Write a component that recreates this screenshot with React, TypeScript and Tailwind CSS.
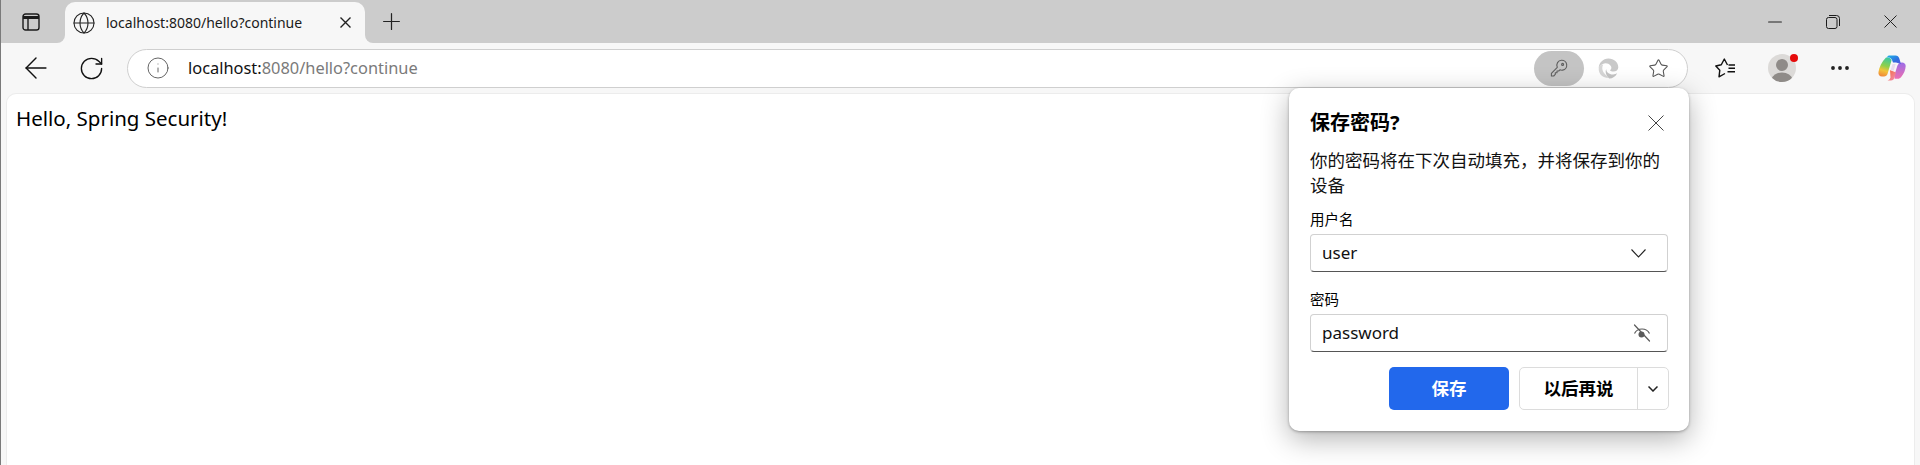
import { ArrowLeft, Globe, Minus, Plus, RotateCw, Info, Star, MoreHorizontal } from "lucide-react";

const FONT = "font-['Noto_Sans','Noto_Sans_CJK_SC',sans-serif]";

function Cross({ size, width = 1, color = "#222" }: { size: number; width?: number; color?: string }) {
  return (
    <svg width={size} height={size} viewBox={`0 0 ${size} ${size}`} fill="none" stroke={color} strokeWidth={width}>
      <path d={`M.5 .5 ${size - 0.5} ${size - 0.5}M${size - 0.5} .5 .5 ${size - 0.5}`} />
    </svg>
  );
}

function Chevron({ w, h, width = 1.1 }: { w: number; h: number; width?: number }) {
  return (
    <svg width={w} height={h} viewBox={`0 0 ${w} ${h}`} fill="none" stroke="#222" strokeWidth={width}>
      <path d={`M.5 .5 ${w / 2} ${h - 1} ${w - 0.5} .5`} />
    </svg>
  );
}

function SidebarIcon() {
  return (
    <svg width="18" height="18" viewBox="0 0 18 18" fill="none" stroke="#1b1b1b" strokeWidth="1.4">
      <rect x="1" y="1" width="16" height="16" rx="2.6" />
      <path d="M1 4.500h16" strokeWidth="3" />
      <path d="M6 5v12" />
    </svg>
  );
}

function RestoreIcon() {
  return (
    <svg width="14" height="14" viewBox="0 0 14 14" fill="none" stroke="#1b1b1b" strokeWidth="1">
      <rect x="0.5" y="2.5" width="10.5" height="11" rx="2" />
      <path d="M3 .5h7.5A3 3 0 0 1 13.500 3.500V11" />
    </svg>
  );
}

function KeyIcon() {
  return (
    <svg width="18" height="18" viewBox="0 0 18 18" fill="none" stroke="#5f5f5f" strokeWidth="1.1" strokeLinejoin="round">
      <path d="M11.500 1.200a5 5 0 0 1 1.200 9.900c-1 .2-2 .1-2.800-.3L8.700 12H7v1.700H5.300v1.700L3.700 17H1.400v-2.700l5.900-6a5 5 0 0 1 4.200-7.100Z" />
      <circle cx="12.600" cy="5.400" r="1" />
    </svg>
  );
}

function EdgeIcon() {
  return (
    <svg width="21" height="21" viewBox="0 0 21 21">
      <path
        fill="#c9c9c9"
        d="M10.500.5c5.300 0 9.800 3.800 9.800 8.800 0 2.700-2.200 4.300-4.800 4.300-1.600 0-3-.5-3.600-1.300 2-1 1.900-3.300.5-4.800C10.600 5.300 7.500 4.800 4.800 6 3 6.900 1.500 8.600 .7 10.400.7 4.900 5 .5 10.500.5Z"
      />
      <path
        fill="#d6d6d6"
        d="M.7 11c0-2.600 2.100-4.400 4.600-4.600-1.600 2.300-1.300 6.200 1.200 9.200 1 1.200 2.300 2.300 3.800 4.400C5 20 .7 16.200.7 11Z"
      />
      <path
        fill="#c4c4c4"
        d="M8.200 11c.1 3.400 3.300 5.800 7 5.500 1.500-.1 2.900-.6 4-1.300-1.600 3.300-4.800 5.400-8 5.300C8.500 18.400 6.800 14 8.200 11Z"
      />
    </svg>
  );
}

function FavoritesIcon() {
  return (
    <svg width="22" height="20" viewBox="0 0 22 20" fill="none" stroke="#111" strokeWidth="1.400" strokeLinejoin="round">
      <path d="M12.500 7 9.300 1 6.300 6.800.8 8l4 4.200-.8 6.600 6-3.300" />
      <path d="M13.500 7H20M13.500 10.300H20M12.500 13.700H20" />
    </svg>
  );
}

function ProfileIcon() {
  return (
    <div className="relative h-[28px] w-[28px]">
      <svg width="28" height="28" viewBox="0 0 28 28">
        <defs>
          <clipPath id="avatar">
            <circle cx="14" cy="14" r="14" />
          </clipPath>
        </defs>
        <circle cx="14" cy="14" r="14" fill="#dcdad8" />
        <g clipPath="url(#avatar)" fill="#8f8b88">
          <circle cx="14" cy="11" r="6" />
          <ellipse cx="14" cy="25" rx="10" ry="6.500" />
        </g>
      </svg>
      <span className="absolute right-[-2px] top-0 h-[8px] w-[8px] rounded-full bg-[#e60b0b]" />
    </div>
  );
}

function CopilotIcon() {
  return (
    <svg width="28" height="26" viewBox="0 0 28 26">
      <defs>
        <linearGradient id="cpA" x1="0" y1="0" x2="1" y2="1">
          <stop offset="0" stopColor="#1fb6e8" />
          <stop offset="0.6" stopColor="#2f6fe0" />
          <stop offset="1" stopColor="#5a5ae0" />
        </linearGradient>
        <linearGradient id="cpB" x1="0.6" y1="0" x2="0.4" y2="1">
          <stop offset="0" stopColor="#3cc8a0" />
          <stop offset="0.45" stopColor="#8fd04a" />
          <stop offset="0.7" stopColor="#f2c33a" />
          <stop offset="1" stopColor="#f08a3a" />
        </linearGradient>
        <linearGradient id="cpC" x1="0.5" y1="0" x2="0.5" y2="1">
          <stop offset="0" stopColor="#9a6ce8" />
          <stop offset="1" stopColor="#ee6fb0" />
        </linearGradient>
        <linearGradient id="cpD" x1="0" y1="0" x2="1" y2="1">
          <stop offset="0" stopColor="#f0683a" />
          <stop offset="1" stopColor="#f590b8" />
        </linearGradient>
      </defs>
      <path fill="url(#cpB)" d="M8 2.500c3-.5 5 .5 5.500 3L9.500 19c-.5 1.500-1.700 2.500-3.500 2.500H4C1.500 21.500 0 19.500 .5 17 1.200 12.500 3.500 7 8 2.500Z" />
      <path fill="url(#cpC)" d="M23 7.500c2.500-.5 4.700.8 4.700 3.500-.2 4-2 8-4.500 11-.9 1-2 1.800-3.500 1.800h-3l-.5-3 3-9.500c.5-2 2-3.300 4.300-3.800Z" />
      <path fill="url(#cpD)" d="m12 15 6 2.500-1.500 5c-.5 1.700-1.700 3-3.500 3H9.500c1.500-.5 2.500-1.500 3-3L12 15Z" />
      <path fill="url(#cpA)" d="M11 .5h6.500c2 0 3.200 1 3.800 3L23 9l-5-1.500h-3c-1-3-2-4.500-4-5-1-.2-1.500-.1-2-.1 .5-1 1-1.900 2-1.900Z" />
      <path fill="#e8dcf0" d="M14.500 9h3.200l-2 6.500h-3.200l2-6.500Z" />
    </svg>
  );
}

function HiddenEyeIcon() {
  return (
    <svg width="18" height="18" viewBox="0 0 18 18" fill="none" stroke="#5a5a5a" strokeWidth="1.200">
      <path d="M1.500 9.500C3 6.500 5.700 5 9 5s6 1.500 7.500 4.500" />
      <circle cx="8.500" cy="10.500" r="3" fill="#5a5a5a" stroke="none" />
      <path d="M1.500 1 16.500 17" strokeLinecap="round" />
    </svg>
  );
}

function Field({ label, value, icon, pad }: { label: string; value: string; icon: React.ReactNode; pad: string }) {
  return (
    <div>
      <div className="mb-[6px] text-[14.5px] leading-[18px] text-black">{label}</div>
      <div className={`flex h-[38px] items-center justify-between rounded-[4px] border border-[#d1d1d1] border-b-[#555] bg-white pl-[11px] text-[17px] text-[#111] ${pad}`}>
        <span>{value}</span>
        {icon}
      </div>
    </div>
  );
}

function SavePasswordPopup() {
  return (
    <div className="absolute right-[231px] top-[88px] w-[400px] rounded-[10px] bg-white px-[21px] pb-[21px] pt-[22px] shadow-[0_8px_28px_rgba(0,0,0,0.3),0_1px_3px_rgba(0,0,0,0.3)]">
      <div className="flex items-center justify-between">
        <span className="text-[20px] font-bold leading-[26px] text-black">保存密码?</span>
        <div className="mr-[4px]">
          <Cross size={16} color="#444" />
        </div>
      </div>
      <p className="mt-[12px] text-[17.5px] leading-[25px] text-[#111]">你的密码将在下次自动填充，并将保存到你的设备</p>
      <div className="mt-[12px] flex flex-col gap-[18px]">
        <Field label="用户名" value="user" pad="pr-[21px]" icon={<Chevron w={15} h={9} />} />
        <Field label="密码" value="password" pad="pr-[16px]" icon={<HiddenEyeIcon />} />
      </div>
      <div className="-mr-[1px] mt-[15px] flex justify-end gap-[10px]">
        <button className="flex h-[43px] w-[120px] items-center justify-center rounded-[5px] bg-[#2268ec] text-[17.5px] font-bold text-white">
          保存
        </button>
        <div className="flex h-[43px] rounded-[5px] border border-[#dcdcdc] bg-white">
          <button className="w-[117px] text-[17.5px] font-bold text-black">以后再说</button>
          <div className="flex w-[31px] items-center justify-center border-l border-[#dcdcdc]">
            <Chevron w={10} h={6} width={1.5} />
          </div>
        </div>
      </div>
    </div>
  );
}

export default function App() {
  return (
    <div className={`relative flex h-[465px] w-[1920px] flex-col overflow-hidden border-l border-[#7a7a7a] bg-[#f7f7f7] ${FONT}`}>
      {/* tab strip */}
      <div className="flex h-[43px] bg-[#f7f7f7]">
        <div className="flex h-[43px] w-[64px] items-center justify-center rounded-br-[8px] bg-[#cccccc] pr-[4px]">
          <SidebarIcon />
        </div>
        <div className="flex h-[43px] items-end bg-[#cccccc]">
          <div className="flex h-[41px] w-[300px] items-center rounded-t-[10px] bg-[#f7f7f7] pl-[7px] pr-[14px]">
            <Globe size={24} strokeWidth={1.1} className="text-[#222]" />
            <span className="ml-[10px] flex-1 text-[14px] text-[#1a1a1a]">localhost:8080/hello?continue</span>
            <Cross size={11} width={1.4} />
          </div>
        </div>
        <div className="flex h-[43px] flex-1 items-center rounded-bl-[8px] bg-[#cccccc]">
          <div className="flex w-[52px] justify-center">
            <Plus size={27} strokeWidth={1.1} className="text-[#222]" />
          </div>
          <div className="ml-auto flex items-center">
            <div className="flex w-[58px] justify-center pr-[2px]">
              <Minus size={22} strokeWidth={1.1} className="text-[#222]" />
            </div>
            <div className="flex w-[58px] justify-center pr-[2px]">
              <RestoreIcon />
            </div>
            <div className="flex w-[57px] justify-center pr-[2px]">
              <Cross size={13} />
            </div>
          </div>
        </div>
      </div>

      {/* toolbar */}
      <div className="flex h-[50px] items-center pl-[7px]">
        <div className="flex w-[56px] justify-center">
          <ArrowLeft size={34} strokeWidth={1} className="text-[#111]" />
        </div>
        <div className="flex w-[55px] justify-center">
          <RotateCw size={27} strokeWidth={1.2} className="text-[#111]" />
        </div>
        <div className="ml-[8px] flex h-[39px] w-[1561px] items-center rounded-full border border-[#cfcfcf] bg-white pl-[18px] pr-[18px]">
          <Info size={24} strokeWidth={0.9} className="text-[#555]" />
          <span className="ml-[18px] flex-1 text-[16.4px]">
            <span className="text-[#111]">localhost:</span>
            <span className="text-[#7a7a7a]">8080/hello?continue</span>
          </span>
          <div className="flex h-[35px] w-[50px] items-center justify-center rounded-full bg-[#c4c4c4]">
            <KeyIcon />
          </div>
          <div className="ml-[13px] flex w-[22px] justify-center">
            <EdgeIcon />
          </div>
          <div className="ml-[29px]">
            <Star size={21} strokeWidth={1.2} className="text-[#555]" />
          </div>
        </div>
        <div className="ml-[27px] flex items-center">
          <FavoritesIcon />
          <div className="ml-[31px]">
            <ProfileIcon />
          </div>
          <div className="ml-[32px]">
            <MoreHorizontal size={24} strokeWidth={1.8} className="text-[#222]" />
          </div>
          <div className="ml-[26px]">
            <CopilotIcon />
          </div>
        </div>
      </div>

      {/* page */}
      <div className="ml-[5px] mr-[5px] flex-1 rounded-t-[10px] border border-b-0 border-[#ececec] bg-white px-[9px] pt-[11px] text-[20.5px] leading-[27px] text-black">
        Hello, Spring Security!
      </div>

      <SavePasswordPopup />
    </div>
  );
}
